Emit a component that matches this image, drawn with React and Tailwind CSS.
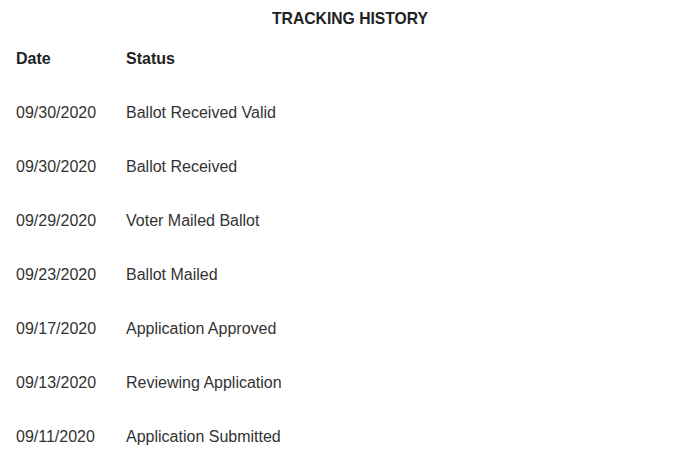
export default function App() {
  const rows = [
    ["09/30/2020", "Ballot Received Valid"],
    ["09/30/2020", "Ballot Received"],
    ["09/29/2020", "Voter Mailed Ballot"],
    ["09/23/2020", "Ballot Mailed"],
    ["09/17/2020", "Application Approved"],
    ["09/13/2020", "Reviewing Application"],
    ["09/11/2020", "Application Submitted"],
  ];
  return (
    <div className="w-[700px] h-[465px] pt-[1px] bg-white text-[#222222] overflow-hidden" style={{ fontFamily: '"Liberation Sans", Arial, sans-serif' }}>
      <div className="h-[31px] pt-[5px] flex items-center justify-center">
        <span className="font-bold text-[15.7px] leading-none">TRACKING HISTORY</span>
      </div>
      <div className="pl-4 grid grid-cols-[110px_1fr] h-[54px] items-center font-bold text-[16px]">
        <span>Date</span>
        <span>Status</span>
      </div>
      {rows.map(([d, s], i) => (
        <div key={i} className="pl-4 grid grid-cols-[110px_1fr] h-[54px] items-center text-[16px] text-[#333333]">
          <span>{d}</span>
          <span>{s}</span>
        </div>
      ))}
    </div>
  );
}
